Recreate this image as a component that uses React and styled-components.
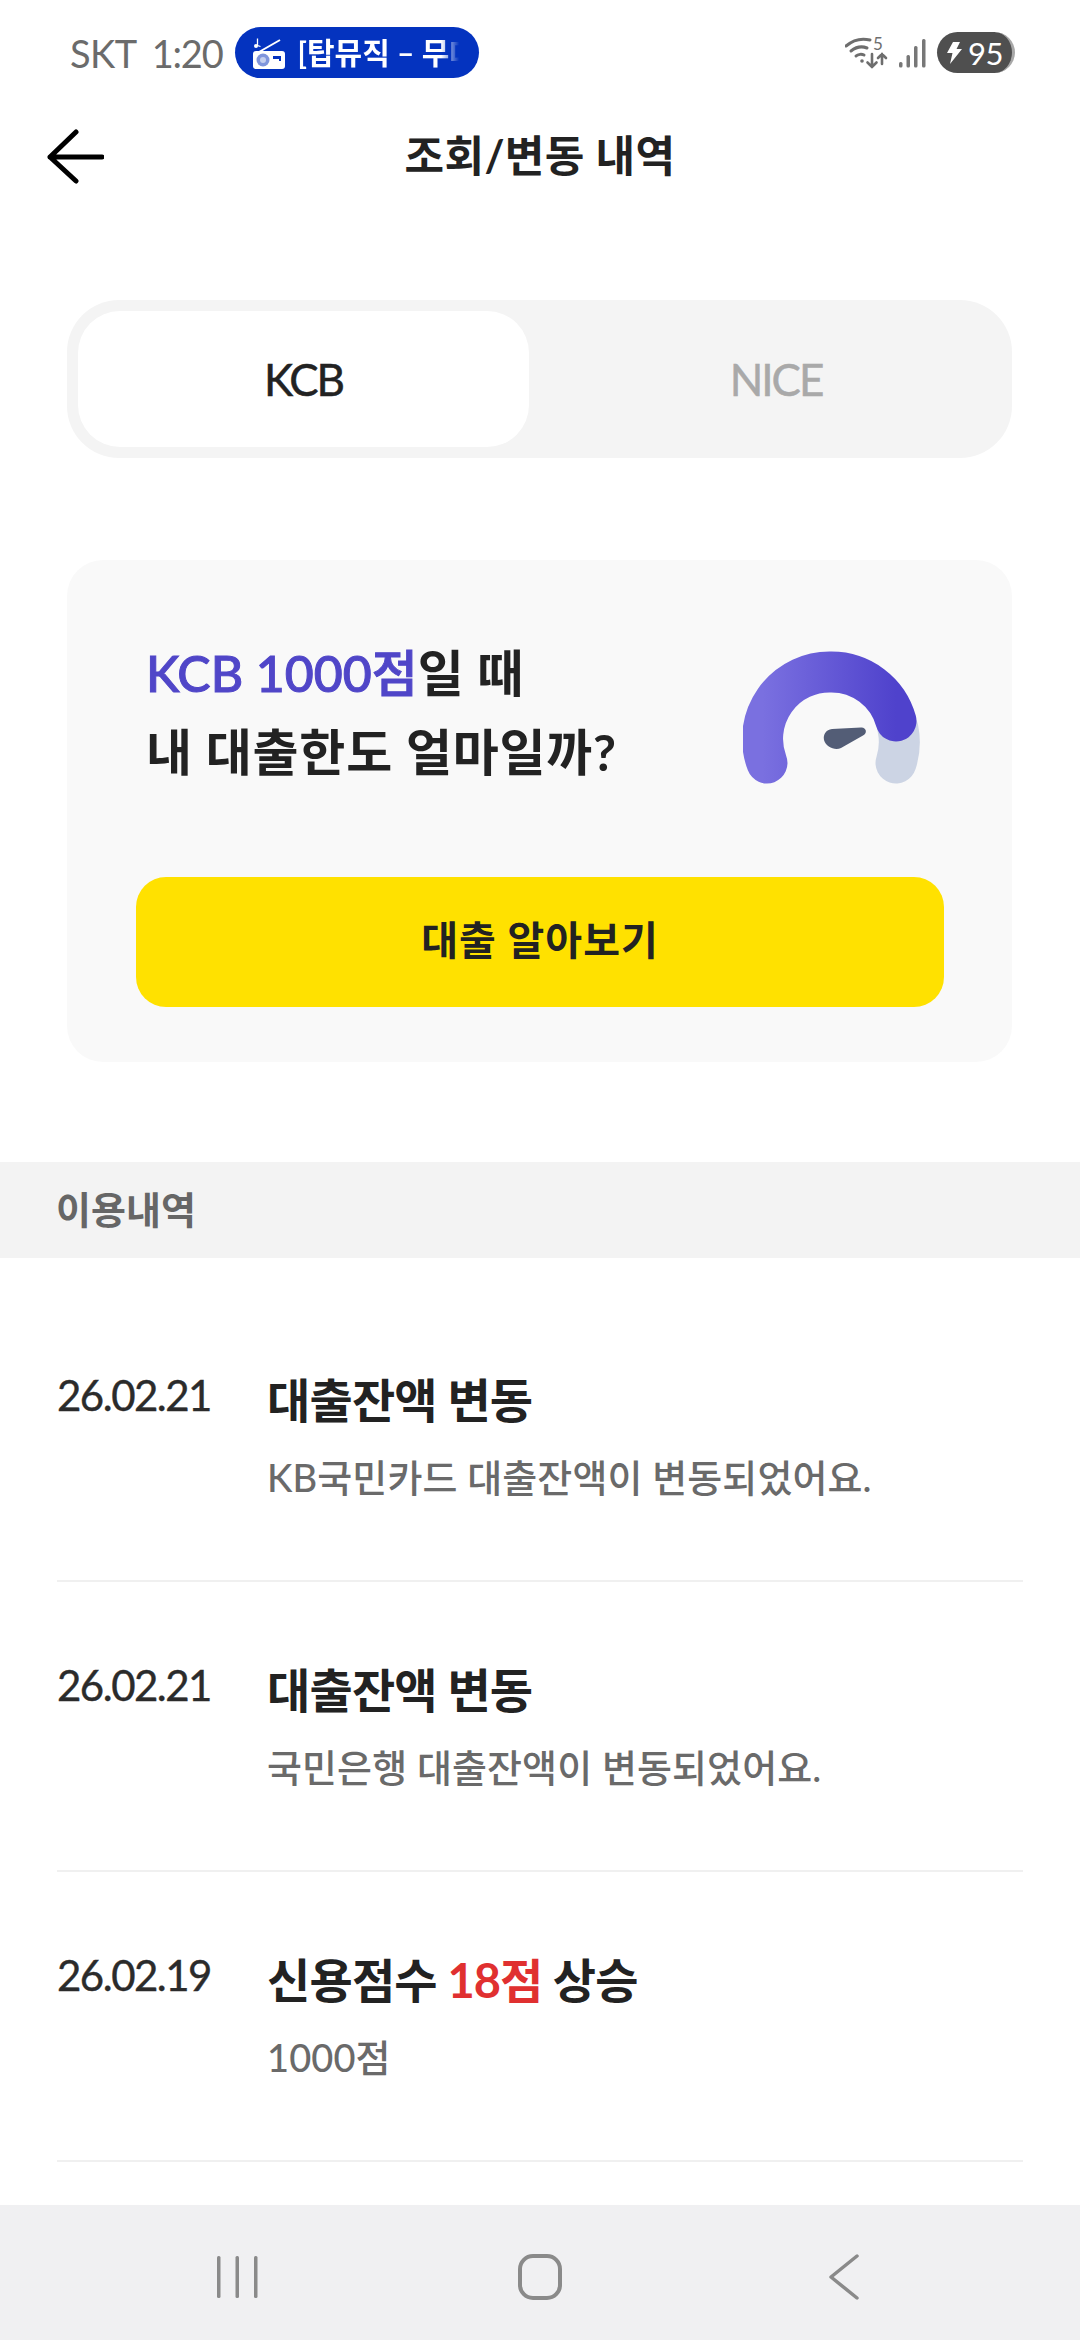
import styled, { createGlobalStyle } from "styled-components"

const font = `"Lato", "Noto Sans CJK KR", sans-serif`

const GlobalStyle = createGlobalStyle`
  html, body {
    margin: 0;
    padding: 0;
    background: #fff;
  }
  * { box-sizing: border-box; }
`

const Page = styled.div`
  width: 1080px;
  height: 2340px;
  display: flex;
  flex-direction: column;
  background: #fff;
  font-family: ${font};
  overflow: hidden;
`

const StatusBar = styled.div`
  height: 105px;
  flex: none;
  padding: 27px 65px 0 70px;
  display: flex;
  align-items: flex-start;
`

const StatusText = styled.span`
  height: 51px;
  display: flex;
  align-items: center;
  font-size: 38px;
  font-weight: 400;
  letter-spacing: ${p => p.$spacing}px;
  color: #6b6b6b;
  margin-right: ${p => p.$gap}px;
`

const MediaPill = styled.div`
  width: 244px;
  height: 51px;
  border-radius: 26px;
  background: #0433bf;
  display: flex;
  align-items: center;
  padding-left: 18px;
  gap: 13px;
`

const MediaText = styled.span`
  font-size: 30px;
  font-weight: 700;
  line-height: 51px;
  color: #fff;
  white-space: nowrap;
  -webkit-mask-image: linear-gradient(to right, #000 80%, transparent 90%);
  mask-image: linear-gradient(to right, #000 80%, transparent 90%);
`

const StatusIcons = styled.div`
  margin-left: auto;
  height: 51px;
  display: flex;
  align-items: center;
  gap: 10px;
`

const Battery = styled.div`
  width: 78px;
  height: 41px;
  margin-left: 1px;
  border-radius: 21px;
  background: #4f4f4f;
  border-right: 3px solid #a8a8a8;
  display: flex;
  align-items: center;
  justify-content: center;
  gap: 6px;
  color: #fff;
  font-size: 31px;
  font-weight: 400;
  letter-spacing: -0.5px;
`

const Header = styled.header`
  height: 102px;
  flex: none;
  padding-bottom: 6px;
  position: relative;
  display: flex;
  align-items: center;
  justify-content: center;
`

const BackButton = styled.div`
  position: absolute;
  left: 46px;
  top: 24px;
  width: 58px;
  height: 58px;
`

const HeaderTitle = styled.h1`
  margin: 0;
  font-size: 43px;
  font-weight: 700;
  color: #222;
  letter-spacing: 0.4px;
`

const Tabs = styled.div`
  margin: 93px 68px 0 67px;
  height: 158px;
  flex: none;
  border-radius: 52px;
  background: #f4f4f4;
  padding: 11px;
  display: grid;
  grid-template-columns: 451px 1fr;
`

const Tab = styled.div`
  border-radius: 42px;
  background: ${p => (p.$active ? "#fff" : "transparent")};
  color: ${p => (p.$active ? "#222" : "#a9a9a9")};
  padding-left: ${p => (p.$active ? 0 : 22)}px;
  display: flex;
  align-items: center;
  justify-content: center;
  font-size: 44px;
  font-weight: 400;
  letter-spacing: -2px;
  -webkit-text-stroke: 0.5px currentColor;
`

const Card = styled.section`
  margin: 102px 68px 0 67px;
  height: 502px;
  flex: none;
  border-radius: 36px;
  background: #f9f9f9;
  padding: 74px 68px 38px 79px;
  display: flex;
  flex-direction: column;
`

const CardTop = styled.div`
  height: 243px;
  flex: none;
  display: flex;
  justify-content: space-between;
  align-items: flex-start;
`

const CardTitle = styled.div`
  font-size: 50px;
  font-weight: 700;
  line-height: 79px;
  letter-spacing: 0.8px;
  color: #222;
`

const Accent = styled.span`
  color: ${p => p.$color};
  font-weight: ${p => p.$weight || "inherit"};
  -webkit-text-stroke: ${p => p.$stroke || 0}px currentColor;
  letter-spacing: ${p => p.$spacing || 0}px;
`

const Gauge = styled.svg`
  width: 177px;
  height: 133px;
  margin: 17px 24px 0 0;
  flex: none;
`

const LoanButton = styled.div`
  height: 130px;
  margin-left: -10px;
  flex: none;
  border-radius: 30px;
  background: #ffe100;
  padding-bottom: 8px;
  display: flex;
  align-items: center;
  justify-content: center;
  font-size: 40px;
  font-weight: 700;
  letter-spacing: 1px;
  color: #222;
`

const SectionBar = styled.div`
  margin-top: 100px;
  height: 96px;
  flex: none;
  background: #f3f3f3;
  padding: 0 0 6px 56px;
  display: flex;
  align-items: center;
  font-size: 38px;
  font-weight: 700;
  color: #666;
`

const List = styled.div`
  padding: 34px 57px 0;
  flex: 1;
`

const Row = styled.div`
  height: 290px;
  display: flex;
  padding-top: 73px;
  border-bottom: 2px solid #f0f0f0;
`

const DateText = styled.div`
  width: 210px;
  flex: none;
  font-size: 42px;
  line-height: 60px;
  font-weight: 400;
  letter-spacing: -1.5px;
  -webkit-text-stroke: 0.4px currentColor;
  color: #2b2b2b;
`

const RowBody = styled.div`
  padding-top: 1px;
  display: flex;
  flex-direction: column;
`

const RowTitle = styled.div`
  font-size: 47px;
  line-height: 68px;
  font-weight: 700;
  letter-spacing: -0.8px;
  color: #222;
`

const RowSub = styled.div`
  margin-top: 13px;
  font-size: 38px;
  line-height: 60px;
  font-weight: 500;
  color: #6a6a6a;
  letter-spacing: 0.1px;
`

const NavBar = styled.nav`
  height: 135px;
  flex: none;
  background: #f0f0f2;
  padding-top: 9px;
  display: grid;
  grid-template-columns: repeat(3, 302px);
  justify-content: center;
  align-items: center;
`

const NavSlot = styled.div`
  display: flex;
  justify-content: center;
  padding-left: ${p => p.$shift || 0}px;
`

const rows = [
  { date: "26.02.21", title: "대출잔액 변동", sub: "KB국민카드 대출잔액이 변동되었어요." },
  { date: "26.02.21", title: "대출잔액 변동", sub: "국민은행 대출잔액이 변동되었어요." },
  {
    date: "26.02.19",
    title: (
      <>
        신용점수 <Accent $color="#e03030" $spacing={-1}>18점</Accent> 상승
      </>
    ),
    sub: "1000점",
  },
]

const RadioIcon = () => (
  <svg width="32" height="32" viewBox="0 0 32 32" style={{ flex: "none" }}>
    <path d="M6 15L27 3" stroke="#fff" strokeWidth="2" />
    <path d="M4.5 1.5v7l3 1" stroke="#fff" strokeWidth="1.3" fill="none" />
    <circle cx="3" cy="9" r="2" fill="#fff" />
    <rect x="0" y="14" width="32" height="18" rx="3" fill="#fff" />
    <circle cx="10" cy="23" r="6.5" fill="#7f95dc" />
    <circle cx="10" cy="23" r="3" fill="#c4cfee" />
    <rect x="20" y="19" width="8" height="3" fill="#0433bf" />
    <rect x="26" y="22" width="2" height="2" fill="#0433bf" />
  </svg>
)

const WifiIcon = () => (
  <svg width="44" height="40" viewBox="0 -4 44 40" fill="none" stroke="#6e6e6e" strokeLinecap="round">
    <path d="M1 9C8 3 17 1 25 3" strokeWidth="3" />
    <path d="M6 14C11 10 17 9 22 11" strokeWidth="3" />
    <path d="M11 19C13 17 17 17 19 18" strokeWidth="3" />
    <circle cx="17" cy="24" r="1.8" fill="#6e6e6e" stroke="none" />
    <path d="M27 17v13M22.500 25.500l4.500 4.500 4.500-4.500" strokeWidth="2.6" />
    <path d="M37 27V17M33 21l4-4 4 4" strokeWidth="2.6" />
    <text x="28" y="13" fontSize="17" fill="#6e6e6e" stroke="none" fontFamily="Lato">5</text>
  </svg>
)

const SignalIcon = () => (
  <svg width="27" height="30" viewBox="0 0 27 30" fill="#777">
    <rect x="0" y="24" width="3.5" height="5.500" rx="1.5" />
    <rect x="7.500" y="17" width="3.5" height="12.500" rx="1.5" />
    <rect x="15" y="8" width="3.5" height="21.500" rx="1.5" />
    <rect x="23" y="1" width="3.5" height="28.500" rx="1.5" />
  </svg>
)

const BoltIcon = () => (
  <svg width="16" height="22" viewBox="0 0 16 22" fill="#fff">
    <path d="M7 0H14L10.500 7H16L4 22L6.500 11H1Z" />
  </svg>
)

const App = () => {
  return (
    <Page>
      <GlobalStyle />
      <StatusBar>
        <StatusText $gap={15} $spacing={-0.5}>SKT</StatusText>
        <StatusText $gap={12} $spacing={-1.2}>1:20</StatusText>
        <MediaPill>
          <RadioIcon />
          <MediaText>[탑뮤직 – 무대</MediaText>
        </MediaPill>
        <StatusIcons>
          <WifiIcon />
          <SignalIcon />
          <Battery>
            <BoltIcon />
            95
          </Battery>
        </StatusIcons>
      </StatusBar>
      <Header>
        <BackButton>
          <svg width="58" height="58" viewBox="0 0 58 58" fill="none" stroke="#000" strokeWidth="5" strokeLinecap="round" strokeLinejoin="round">
            <path d="M56 28H4M30 3L4 28l26 24" />
          </svg>
        </BackButton>
        <HeaderTitle>조회/변동 내역</HeaderTitle>
      </Header>
      <Tabs>
        <Tab $active>KCB</Tab>
        <Tab>NICE</Tab>
      </Tabs>
      <Card>
        <CardTop>
          <CardTitle>
            <Accent $color="#5046c8" $weight={500} $stroke={1}>KCB 1000점</Accent>일 때
            <br />내 대출한도 얼마일까?
          </CardTitle>
          <Gauge viewBox="0 0 177 133" fill="none">
            <defs>
              <linearGradient id="gaugeFill" x1="0" x2="1" y1="0" y2="0">
                <stop offset="0" stopColor="#7a70e0" />
                <stop offset="1" stopColor="#4f42cc" />
              </linearGradient>
            </defs>
            <path d="M155 78A67 67 0 0 1 153 112" stroke="#ccd4e4" strokeWidth="41" strokeLinecap="round" />
            <path d="M24 112A67 67 0 0 1 88 21A67 67 0 0 1 153 70" stroke="url(#gaugeFill)" strokeWidth="41" strokeLinecap="round" />
            <path d="M89 78L118 76.500C123 76 125 82 120 84.500L98 97C92 100 83 96 81 89C80 83 83 79 89 78Z" fill="#535d76" />
          </Gauge>
        </CardTop>
        <LoanButton>대출 알아보기</LoanButton>
      </Card>
      <SectionBar>이용내역</SectionBar>
      <List>
        {rows.map((row, i) => (
          <Row key={i}>
            <DateText>{row.date}</DateText>
            <RowBody>
              <RowTitle>{row.title}</RowTitle>
              <RowSub>{row.sub}</RowSub>
            </RowBody>
          </Row>
        ))}
      </List>
      <NavBar>
        <NavSlot>
          <svg width="42" height="44" viewBox="0 0 42 44" fill="#8a8a8a">
            <rect x="0" y="1" width="3.500" height="42" rx="1.5" />
            <rect x="18.500" y="1" width="3.500" height="42" rx="1.5" />
            <rect x="37" y="1" width="3.500" height="42" rx="1.5" />
          </svg>
        </NavSlot>
        <NavSlot>
          <svg width="44" height="46" viewBox="0 0 44 46" fill="none" stroke="#8a8a8a" strokeWidth="4">
            <rect x="2" y="2" width="40" height="42" rx="13" />
          </svg>
        </NavSlot>
        <NavSlot $shift={4}>
          <svg width="32" height="46" viewBox="0 0 32 46" fill="none" stroke="#8a8a8a" strokeWidth="3.500" strokeLinecap="round" strokeLinejoin="round">
            <path d="M29 2L3 23l26 21" />
          </svg>
        </NavSlot>
      </NavBar>
    </Page>
  )
}

export default App
